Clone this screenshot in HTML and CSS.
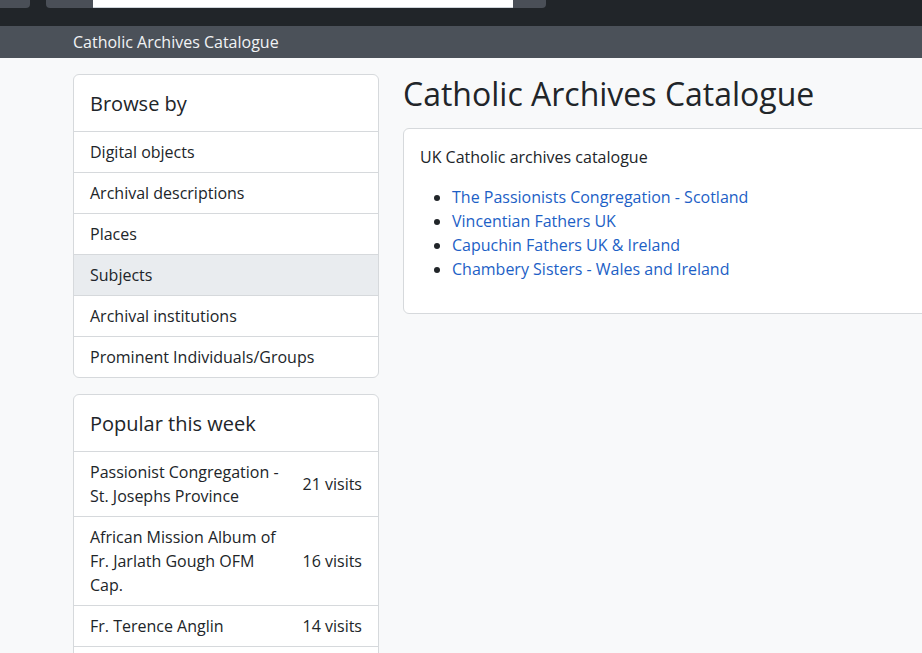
FILE: index.html
```html
<!DOCTYPE html>
<html lang="en">
<head>
<meta charset="utf-8">
<title>Catholic Archives Catalogue</title>
<link rel="stylesheet" href="styles.css">
</head>
<body>
<header class="topbar">
  <div class="btn-stub btn-left"></div>
  <div class="search">
    <div class="search-addon search-addon-left"></div>
    <div class="search-input"></div>
    <div class="search-addon search-addon-right"></div>
  </div>
</header>
<div class="sitebar">
  <span class="site-name">Catholic Archives Catalogue</span>
</div>
<div class="page">
  <aside class="sidebar">
    <section class="card">
      <h2 class="card-title">Browse by</h2>
      <ul class="list">
        <li class="list-item">Digital objects</li>
        <li class="list-item">Archival descriptions</li>
        <li class="list-item">Places</li>
        <li class="list-item active">Subjects</li>
        <li class="list-item">Archival institutions</li>
        <li class="list-item">Prominent Individuals/Groups</li>
      </ul>
    </section>
    <section class="card">
      <h2 class="card-title">Popular this week</h2>
      <ul class="list">
        <li class="list-item popular"><span class="pop-name">Passionist Congregation - St. Josephs Province</span><span class="pop-count">21 visits</span></li>
        <li class="list-item popular"><span class="pop-name">African Mission Album of Fr. Jarlath Gough OFM Cap.</span><span class="pop-count">16 visits</span></li>
        <li class="list-item popular"><span class="pop-name">Fr. Terence Anglin</span><span class="pop-count">14 visits</span></li>
        <li class="list-item popular"><span class="pop-name">Capuchin Fathers UK &amp; Ireland</span><span class="pop-count">12 visits</span></li>
      </ul>
    </section>
  </aside>
  <main class="main">
    <h1 class="title">Catholic Archives Catalogue</h1>
    <div class="content-card">
      <p class="intro">UK Catholic archives catalogue</p>
      <ul class="links">
        <li><a href="#">The Passionists Congregation - Scotland</a></li>
        <li><a href="#">Vincentian Fathers UK</a></li>
        <li><a href="#">Capuchin Fathers UK &amp; Ireland</a></li>
        <li><a href="#">Chambery Sisters - Wales and Ireland</a></li>
      </ul>
    </div>
  </main>
</div>
</body>
</html>
```

FILE: styles.css
```css
* { box-sizing: border-box; }

html, body {
  margin: 0;
  padding: 0;
  overflow: hidden;
}

body {
  background: #f8f9fa;
  color: #212529;
  font-family: "Open Sans", "DejaVu Sans", sans-serif;
  font-size: 16px;
  line-height: 24px;
  width: 922px;
  height: 653px;
}

.topbar {
  height: 26px;
  background: #212529;
  display: flex;
  align-items: flex-start;
  gap: 16px;
}

.btn-stub {
  width: 30px;
  height: 8px;
  background: #4a4f57;
  border-radius: 0 0 4px 0;
}

.search {
  display: flex;
  height: 8px;
}

.search-addon {
  width: 47px;
  background: #4a4f57;
}

.search-addon-left { border-radius: 0 0 0 4px; }

.search-addon-right {
  width: 33px;
  border-radius: 0 0 4px 0;
}

.search-input {
  width: 420px;
  background: #ffffff;
  border-bottom: 1px solid #ced4da;
}

.sitebar {
  height: 32px;
  background: #4b5159;
  padding: 4px 0 0 73px;
}

.site-name {
  color: #f1f3f5;
  font-size: 16px;
  line-height: 24px;
}

.page {
  display: flex;
  gap: 24px;
  padding: 16px 0 0 73px;
}

.sidebar {
  width: 306px;
  flex: none;
  display: flex;
  flex-direction: column;
  gap: 16px;
}

.card {
  background: #fff;
  border: 1px solid #d6d9dc;
  border-radius: 6px;
  overflow: hidden;
}

.card-title {
  margin: 0;
  font-size: 20px;
  font-weight: 400;
  line-height: 24px;
  padding: 17px 16px 15px;
  border-bottom: 1px solid #d6d9dc;
}

.list {
  list-style: none;
  margin: 0;
  padding: 0;
}

.list-item {
  padding: 8px 16px;
  border-bottom: 1px solid #d6d9dc;
}

.list-item:last-child { border-bottom: none; }

.list-item.active { background: #e9ecef; }

.popular {
  display: flex;
  justify-content: space-between;
  align-items: center;
  gap: 18px;
}

.pop-name { flex: 1 1 auto; }

.pop-count {
  flex: none;
  white-space: nowrap;
}

.main {
  flex: none;
  width: 620px;
}

.title {
  margin: 1px 0 15px;
  font-size: 32px;
  font-weight: 400;
  line-height: 1.2;
}

.content-card {
  background: #fff;
  border: 1px solid #d6d9dc;
  border-radius: 6px;
  padding: 16px;
}

.intro { margin: 0 0 16px; }

.links {
  margin: 0 0 16px;
  padding-left: 32px;
}

.links a {
  color: #1d5fc6;
  text-decoration: none;
}
```
